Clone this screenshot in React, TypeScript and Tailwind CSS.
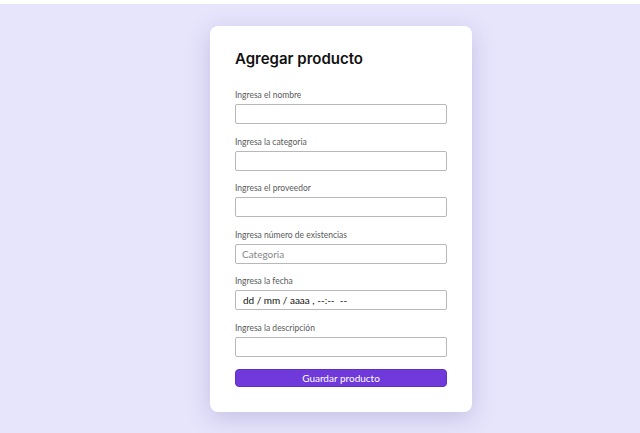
const fields = [
  { label: "Ingresa el nombre", type: "text", placeholder: "" },
  { label: "Ingresa la categoria", type: "text", placeholder: "" },
  { label: "Ingresa el proveedor", type: "text", placeholder: "" },
  { label: "Ingresa número de existencias", type: "text", placeholder: "Categoria" },
  { label: "Ingresa la fecha", type: "date", placeholder: "" },
  { label: "Ingresa la descripción", type: "text", placeholder: "" },
];

export default function App() {
  return (
    <div className="min-h-screen bg-white pt-[4px] font-['Lato',sans-serif]">
      <div className="flex min-h-[429px] justify-center bg-[#e7e5fc] pt-[22px] pb-[21px] pl-[42px]">
        <form
          onSubmit={(e) => e.preventDefault()}
          className="w-[262px] self-start rounded-[8px] bg-white px-[25px] pt-[22px] pb-[25px] shadow-[0_6px_24px_rgba(70,60,140,0.22)]"
        >
          <h1 className="mb-[20px] font-['Inter',sans-serif] text-[15px] font-semibold leading-[22px] text-[#111]">
            Agregar producto
          </h1>

          {fields.map((f) => (
            <div key={f.label} className="mb-[12.6px]">
              <label className="mb-[4px] block text-[8.5px] leading-[10px] text-[#5a5a5a]">
                {f.label}
              </label>
              {f.type === "date" ? (
                <div className="flex h-[20px] items-center rounded-[2px] border border-[#b8b8b8] pl-[7px] text-[10px] text-[#111]">
                  dd / mm / aaaa , --:-- &nbsp;--
                </div>
              ) : (
                <input
                  type="text"
                  placeholder={f.placeholder}
                  className="block h-[20px] w-full rounded-[2px] border border-[#b8b8b8] px-[6px] text-[10px] text-[#111] placeholder:text-[#888] focus:outline-none"
                />
              )}
            </div>
          ))}

          <button
            type="submit"
            className="-mt-[0.6px] block h-[18px] w-full rounded-[4px] border border-[#5f2fc7] bg-[#6f3ad9] text-[10px] leading-[16px] text-white"
          >
            Guardar producto
          </button>
        </form>
      </div>
    </div>
  );
}
